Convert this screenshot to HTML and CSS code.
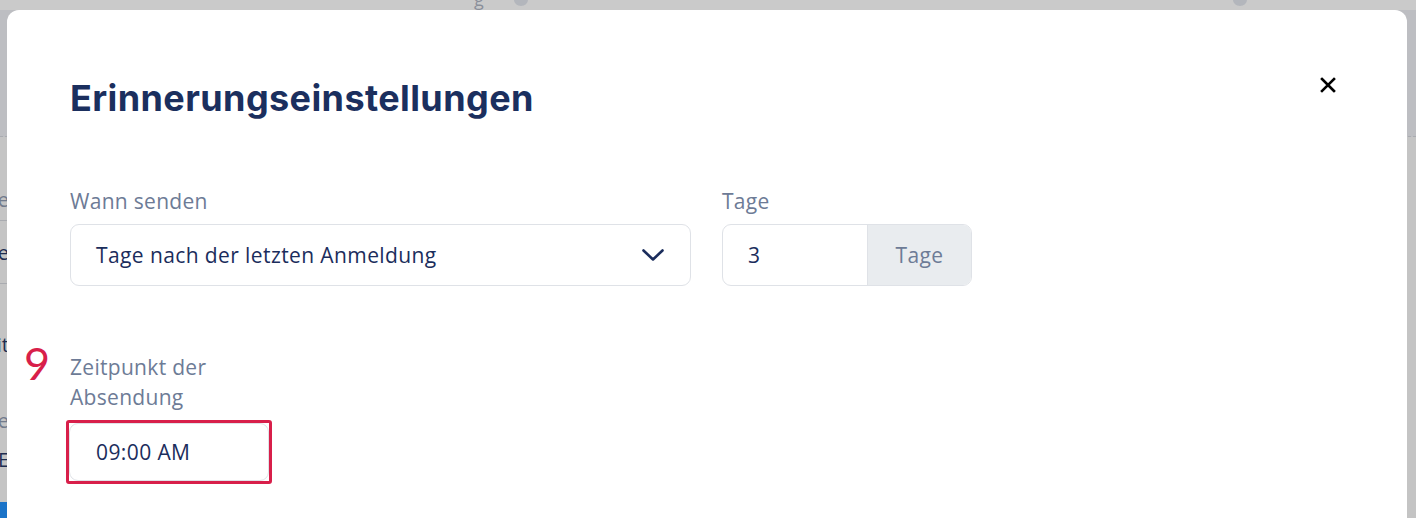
FILE: index.html
```
<!DOCTYPE html>
<html lang="de">
<head>
<meta charset="utf-8">
<title>Erinnerungseinstellungen</title>
<link rel="stylesheet" href="styles.css">
</head>
<body>
<div class="backdrop">
  <div class="bg-top"><span class="bg-top-g">g</span><span class="bg-dot d1"></span><span class="bg-dot d2"></span></div>
  <div class="bg-band"></div>
  <div class="bg-side">
    <div class="bg-row r1 muted"><span>Name</span></div>
    <div class="bg-row r2 dark"><span>Kategorie</span></div>
    <div class="bg-row r3 dark"><span>Zeit</span></div>
    <div class="bg-row r4 muted"><span>Wie</span></div>
    <div class="bg-row r5 dark"><span>E</span></div>
    <div class="bg-blue"></div>
  </div>
</div>

<div class="modal">
  <div class="modal-head">
    <h1 class="title">Erinnerungseinstellungen</h1>
    <button class="close" aria-label="Schließen">
      <svg width="16" height="16" viewBox="0 0 16 16"><path d="M2 2L14 14M14 2L2 14" stroke="#000" stroke-width="2.6" stroke-linecap="square" fill="none"/></svg>
    </button>
  </div>

  <div class="row">
    <div class="field f-when">
      <label class="label">Wann senden</label>
      <div class="select">
        <span>Tage nach der letzten Anmeldung</span>
        <svg class="chev" width="24" height="16" viewBox="0 0 24 16"><path d="M2.5 3.5L12 12.5L21.5 3.5" stroke="#1b2d5c" stroke-width="2.6" fill="none" stroke-linecap="round" stroke-linejoin="round"/></svg>
      </div>
    </div>
    <div class="field f-days">
      <label class="label">Tage</label>
      <div class="group">
        <div class="group-input">3</div>
        <div class="group-addon">Tage</div>
      </div>
    </div>
  </div>

  <div class="row row2">
    <div class="field f-time">
      <span class="badge">9</span>
      <label class="label">Zeitpunkt der Absendung</label>
      <div class="highlight">
        <div class="time-input">09:00 AM</div>
      </div>
    </div>
  </div>
</div>
</body>
</html>
```
FILE: styles.css
```
* { box-sizing: border-box; }
html, body { margin: 0; padding: 0; }
body {
  width: 1416px;
  height: 518px;
  overflow: hidden;
  position: relative;
  background: #c4c4c4;
  font-family: "Open Sans", "Lato", sans-serif;
}

/* backdrop (page behind the overlay) */
.backdrop { position: absolute; inset: 0; }
.bg-top { height: 10px; background: #cacaca; position: relative; }
.bg-top-g { position: absolute; left: 474px; top: -13px; font-size: 18px; color: #8a8f9a; }
.bg-dot { position: absolute; top: -6px; width: 14px; height: 12px; border-radius: 50%; background: #b3b6bc; }
.bg-dot.d1 { left: 514px; }
.bg-dot.d2 { left: 1233px; }
.bg-band { height: 127px; background: #bdbec2; border-bottom: 1px dashed #a9abb0; }
.bg-side { position: absolute; left: 0; top: 138px; width: 7px; height: 380px; }
.bg-row { position: absolute; left: 0; width: 7px; overflow: hidden; display: flex; justify-content: flex-end; font-size: 20px; white-space: nowrap; }
.bg-row span { flex: none; margin-right: -2px; }
.muted { color: #727b8c; }
.dark { color: #1e2d50; }
.r1 { top: 48px; }
.r2 { top: 101px; }
.r3 { top: 193px; }
.r4 { top: 269px; }
.r5 { top: 308px; }
.bg-side::before, .bg-side::after { content: ""; position: absolute; left: 0; width: 7px; height: 1px; background: #a9abb0; }
.bg-side::before { top: 82px; }
.bg-side::after { top: 145px; }
.bg-blue { position: absolute; left: 0; top: 364px; width: 7px; height: 16px; background: #1a73c8; }

/* modal */
.modal {
  position: absolute;
  left: 7px;
  top: 10px;
  width: 1400px;
  height: 560px;
  background: #fff;
  border-radius: 12px;
  padding: 68px 63px 0 63px;
}
.modal-head { display: flex; align-items: center; justify-content: space-between; }
.title {
  margin: 0;
  font-family: "Inter", "Roboto", sans-serif;
  font-weight: 700;
  font-size: 36px;
  line-height: 40px;
  color: #1b2f5e;
  letter-spacing: 0.4px;
}
.close {
  border: 0; background: none; padding: 0; margin: 0 8px 0 0;
  width: 16px; height: 16px; display: block;
  position: relative; top: -13px; cursor: pointer;
}
.close svg { display: block; }

.row { display: flex; gap: 31px; margin-top: 68px; }
.row2 { margin-top: 66px; }
.field { display: flex; flex-direction: column; gap: 8px; position: relative; }
.label { font-size: 21px; line-height: 30px; color: #6d7b96; letter-spacing: 0.3px; }
.f-when { width: 621px; }
.f-days { width: 250px; }
.f-time { width: 206px; }

.select {
  height: 62px;
  border: 1px solid #dfe2e7;
  border-radius: 9px;
  display: flex; align-items: center; justify-content: space-between;
  padding: 0 25px 0 25px;
  font-size: 21px; color: #1b2d5c; letter-spacing: 0.4px;
}
.chev { display: block; }

.group {
  height: 62px; display: flex;
  border: 1px solid #dfe2e7; border-radius: 9px; overflow: hidden;
}
.group-input {
  flex: 1; display: flex; align-items: center; padding-left: 25px;
  font-size: 21px; color: #1b2d5c;
}
.group-addon {
  width: 104px; background: #e9ecef; border-left: 1px solid #dfe2e7;
  display: flex; align-items: center; justify-content: center;
  font-size: 21px; color: #6d7b96; letter-spacing: 0.4px;
}

.highlight {
  margin-left: -4px;
  width: 206px;
  border: 3px solid #d81f4a;
  border-radius: 3px;
}
.time-input {
  height: 58px;
  border: 1px solid #dfe2e7;
  border-radius: 9px;
  display: flex; align-items: center; padding-left: 26px;
  font-size: 21px; color: #1b2d5c; letter-spacing: 0.4px;
}
.badge {
  position: absolute; left: -46px; top: -14px;
  font-size: 45px; line-height: 50px; color: #d81f4a;
  font-family: "Lato", sans-serif;
}
```
